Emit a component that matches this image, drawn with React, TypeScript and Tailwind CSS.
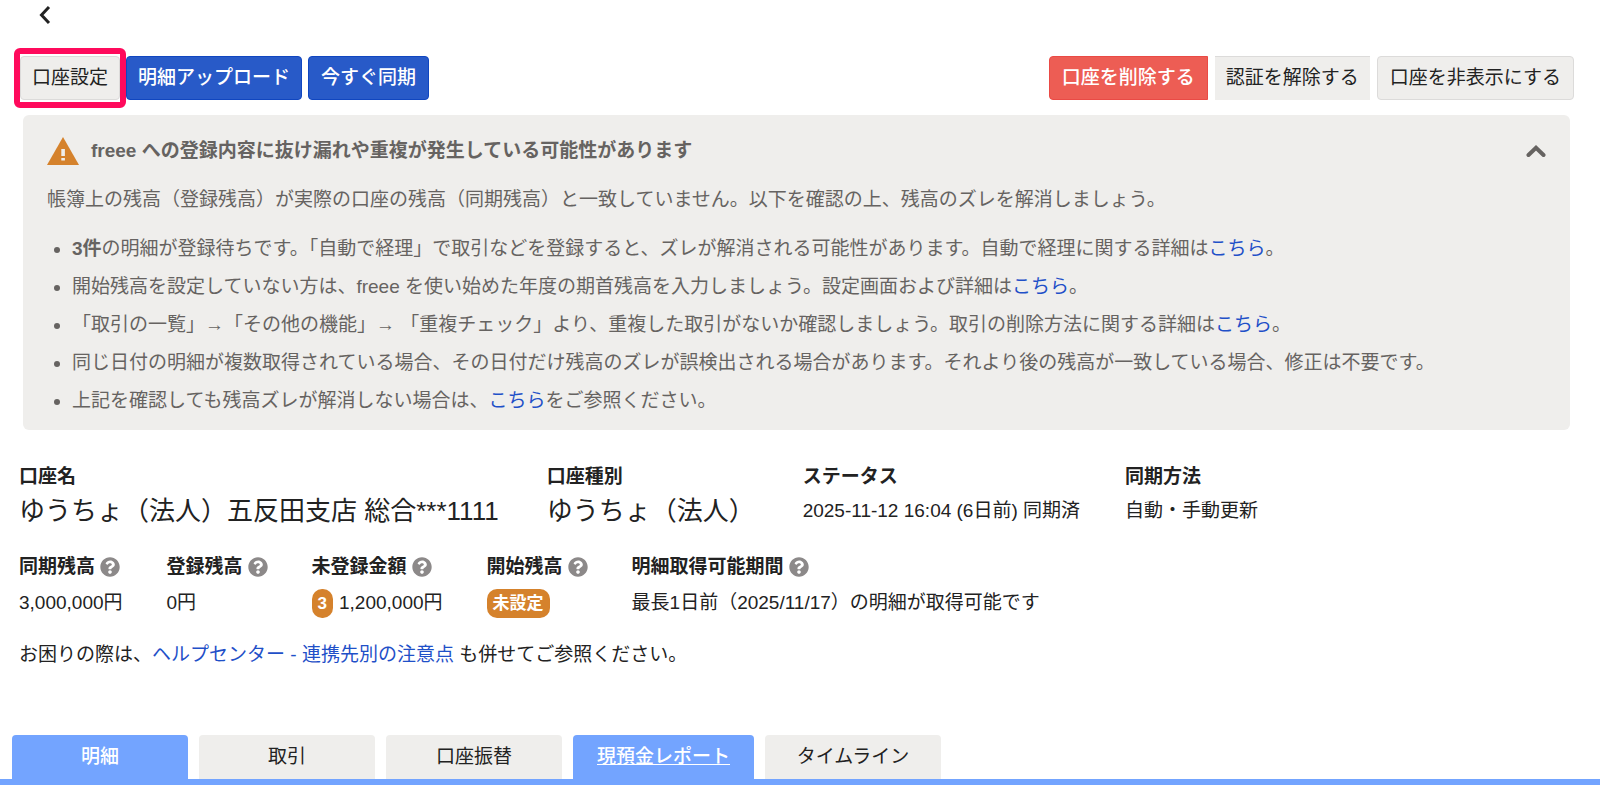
import type { ReactNode } from "react";
import { clsx } from "clsx";

const tabs = [
  { label: "明細", state: "active" },
  { label: "取引", state: "idle" },
  { label: "口座振替", state: "idle" },
  { label: "現預金レポート", state: "hover" },
  { label: "タイムライン", state: "idle" },
];

function HelpIcon() {
  return (
    <svg viewBox="0 0 512 512" className="size-5 shrink-0" role="img" aria-label="ヘルプ">
      <path
        fill="#8c8989"
        d="M504 256c0 136.997-111.043 248-248 248S8 392.997 8 256C8 119.083 119.043 8 256 8s248 111.083 248 248zM262.655 90c-54.497 0-89.255 22.957-116.549 63.758-3.536 5.286-2.353 12.415 2.715 16.258l34.699 26.31c5.205 3.947 12.621 3.008 16.665-2.122 17.864-22.658 30.113-35.797 57.303-35.797 20.429 0 45.698 13.148 45.698 32.958 0 14.976-12.363 22.667-32.534 33.976C247.128 238.528 216 254.941 216 296v4c0 6.627 5.373 12 12 12h56c6.627 0 12-5.373 12-12v-1.333c0-28.462 83.186-29.647 83.186-106.667 0-58.002-60.165-102-116.531-102zM256 338c-25.365 0-46 20.635-46 46 0 25.364 20.635 46 46 46s46-20.636 46-46c0-25.365-20.635-46-46-46z"
      />
    </svg>
  );
}

function Field({ label, help, large, children }: { label: string; help?: boolean; large?: boolean; children: ReactNode }) {
  return (
    <div className={clsx(large && "pr-[3px]")}>
      <dt className="flex items-center gap-[5px] font-bold leading-7">
        {label}
        {help && <HelpIcon />}
      </dt>
      <dd className={clsx("flex items-center gap-[6px]", help ? "h-11" : "h-10", large && "text-[26px]")}>{children}</dd>
    </div>
  );
}

function Badge({ children }: { children: ReactNode }) {
  return (
    <span className="rounded-[10px] bg-[#d5822c] px-[6px] text-[17px] font-bold leading-[29px] text-white">
      {children}
    </span>
  );
}

function TextLink({ children }: { children: ReactNode }) {
  return (
    <a href="#" className="text-[#1f50c8]">
      {children}
    </a>
  );
}

export default function App() {
  return (
    <div
      lang="ja"
      className="bg-white text-[19px] leading-7 text-[#222] font-['Liberation_Sans','Noto_Sans_CJK_JP',sans-serif]"
    >
      <header className="flex h-14 items-start pl-[38px] pt-[5px]">
        <button type="button" aria-label="戻る">
          <svg viewBox="0 0 14 20" className="h-5 w-[14px]" fill="none" stroke="#222" strokeWidth="3">
            <path d="M11 2 L3.5 10 L11 18" />
          </svg>
        </button>
      </header>

      <div className="flex flex-wrap items-start justify-between pl-5 pr-[26px]">
        <div className="flex gap-[6px]">
          <div className="relative">
            <button
              type="button"
              className="h-11 rounded border border-[#dcdbda] bg-[#efeeec] px-[11px] pb-px"
            >
              口座設定
            </button>
            <div className="pointer-events-none absolute -inset-x-[6px] -inset-y-2 rounded-md border-6 border-[#ff0a5c]" />
          </div>
          <button
            type="button"
            className="h-11 rounded border border-[#1046c0] bg-[#285ac8] px-[11px] pb-px font-medium text-white"
          >
            明細アップロード
          </button>
          <button
            type="button"
            className="h-11 rounded border border-[#1046c0] bg-[#285ac8] px-3 pb-px font-medium text-white"
          >
            今すぐ同期
          </button>
        </div>
        <div className="flex gap-[7px]">
          <button
            type="button"
            className="h-11 rounded-l border border-[#ea4a45] bg-[#ed5d54] px-3 pb-px font-medium text-white"
          >
            口座を削除する
          </button>
          <button type="button" className="h-11 border-t border-[#dcdbda] bg-[#efeeec] px-[11px] pb-px">
            認証を解除する
          </button>
          <button type="button" className="h-11 rounded border border-[#dcdbda] bg-[#efeeec] px-3 pb-px">
            口座を非表示にする
          </button>
        </div>
      </div>

      <section className="ml-[23px] mr-[30px] mt-[15px] rounded-md bg-[#efeeec] px-6 pb-[10px] pt-[21px] text-[#666361]">
        <div className="flex items-center">
          <svg viewBox="0 0 32 28" className="mr-3 h-7 w-8">
            <path fill="#d5822c" d="M16 0 L32 28 H0 Z" />
            <path fill="#efeeec" d="M14.3 12h3.6v7h-3.6zM14.3 21h3.6v2.6h-3.6z" />
          </svg>
          <h2 className="grow pt-px font-bold">freee への登録内容に抜け漏れや重複が発生している可能性があります</h2>
          <button type="button" aria-label="閉じる">
            <svg viewBox="0 0 20 14" className="h-[14px] w-5" fill="none" stroke="#666361" strokeWidth="4">
              <path d="M2.5 11 L10 3.8 L17.5 11" strokeLinecap="round" />
            </svg>
          </button>
        </div>
        <p className="mt-[21px]">
          帳簿上の残高（登録残高）が実際の口座の残高（同期残高）と一致していません。以下を確認の上、残高のズレを解消しましょう。
        </p>
        <ul className="mt-4 list-disc pl-[25px] leading-[38px]">
          <li>
            <b>3件</b>の明細が登録待ちです。「自動で経理」で取引などを登録すると、ズレが解消される可能性があります。自動で経理に関する詳細は<TextLink>こちら</TextLink>。
          </li>
          <li>
            開始残高を設定していない方は、freee を使い始めた年度の期首残高を入力しましょう。設定画面および詳細は<TextLink>こちら</TextLink>。
          </li>
          <li>
            「取引の一覧」→「その他の機能」→ 「重複チェック」より、重複した取引がないか確認しましょう。取引の削除方法に関する詳細は<TextLink>こちら</TextLink>。
          </li>
          <li>
            同じ日付の明細が複数取得されている場合、その日付だけ残高のズレが誤検出される場合があります。それより後の残高が一致している場合、修正は不要です。
          </li>
          <li>
            上記を確認しても残高ズレが解消しない場合は、<TextLink>こちら</TextLink>をご参照ください。
          </li>
        </ul>
      </section>

      <dl className="mt-[33px] flex flex-wrap gap-x-[45px] px-[19px]">
        <Field label="口座名" large>ゆうちょ（法人）五反田支店 総合***1111</Field>
        <Field label="口座種別" large>ゆうちょ（法人）</Field>
        <Field label="ステータス">2025-11-12 16:04 (6日前) 同期済</Field>
        <Field label="同期方法">自動・手動更新</Field>
      </dl>

      <dl className="mt-[22px] flex flex-wrap gap-x-11 px-[19px]">
        <Field label="同期残高" help>3,000,000円</Field>
        <Field label="登録残高" help>0円</Field>
        <Field label="未登録金額" help>
          <Badge>3</Badge>1,200,000円
        </Field>
        <Field label="開始残高" help>
          <Badge>未設定</Badge>
        </Field>
        <Field label="明細取得可能期間" help>最長1日前（2025/11/17）の明細が取得可能です</Field>
      </dl>

      <p className="mt-4 px-[19px]">
        お困りの際は、<TextLink>ヘルプセンター - 連携先別の注意点</TextLink> も併せてご参照ください。
      </p>

      <nav className="mt-[66px] flex gap-[11px] border-b-6 border-[#73a4ff] px-3">
        {tabs.map((tab) => (
          <a
            key={tab.label}
            href="#"
            className={clsx(
              "h-11 min-w-44 rounded-t px-6 text-center leading-[44px]",
              tab.state === "idle" ? "bg-[#efeeec]" : "bg-[#73a4ff] font-medium text-white",
              tab.state === "hover" && "underline",
            )}
          >
            {tab.label}
          </a>
        ))}
      </nav>
    </div>
  );
}
